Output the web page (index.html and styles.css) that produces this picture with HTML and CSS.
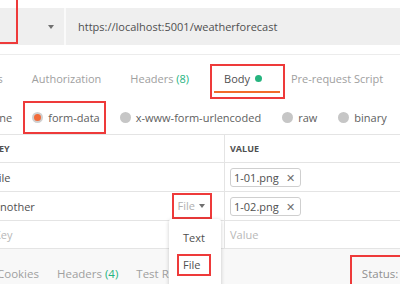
FILE: index.html
```html
<!DOCTYPE html>
<html lang="en">
<head>
  <meta charset="UTF-8">
  <title>Request body</title>
  <link rel="stylesheet" href="styles.css">
</head>
<body>

  <div class="urlbar">
    <div class="method"><span class="caret"></span></div>
    <div class="url">https://localhost:5001/weatherforecast</div>
  </div>
  <div class="mark mark-method"></div>

  <div class="tabs">
    <span class="tab tab-params">Params</span>
    <span class="tab">Authorization</span>
    <span class="tab">Headers <b class="count">(8)</b></span>
    <span class="tab tab-active">Body <i class="dot"></i></span>
    <span class="tab">Pre-request Script</span>
  </div>

  <div class="modes">
    <label class="mode mode-none"><i class="radio"></i>none</label>
    <label class="mode mode-form"><i class="radio radio-on"></i>form-data</label>
    <label class="mode"><i class="radio"></i>x-www-form-urlencoded</label>
    <label class="mode"><i class="radio"></i>raw</label>
    <label class="mode"><i class="radio"></i>binary</label>
  </div>

  <div class="table">
    <div class="cell key head">KEY</div>
    <div class="cell val head">VALUE</div>

    <div class="cell key"><span class="k k-file">File</span></div>
    <div class="cell val"><span class="chip">1-01.png <span class="x">✕</span></span></div>

    <div class="cell key"><span class="k k-another">another</span>
      <span class="type">File <span class="caret"></span></span>
    </div>
    <div class="cell val"><span class="chip">1-02.png <span class="x">✕</span></span></div>

    <div class="cell key"><span class="k k-empty">Key</span></div>
    <div class="cell val"><span class="placeholder">Value</span></div>
  </div>

  <div class="resp">
    <span class="rtab rtab-cookies">Cookies</span>
    <span class="rtab">Headers <b class="count">(4)</b></span>
    <span class="rtab">Test Results</span>
    <span class="status">Status: <b class="ok">200 OK</b></span>
  </div>

  <div class="menu">
    <div class="menu-item">Text</div>
    <div class="menu-item menu-file">File</div>
  </div>

</body>
</html>
```

FILE: styles.css
```css
body {
  margin: 0;
  width: 400px;
  height: 284px;
  overflow: hidden;
  position: relative;
  background: #fff;
  font-family: 'Open Sans', sans-serif;
  font-size: 11px;
  color: #505050;
}

.urlbar {
  display: flex;
  margin-top: 8px;
  height: 37px;
  background: #efefef;
  border-bottom: 1px solid #fff;
}

.method {
  width: 66px;
  flex: none;
  border-right: 2px solid #fafafa;
  display: flex;
  align-items: center;
  justify-content: flex-end;
  padding-right: 10px;
  box-sizing: border-box;
}

.caret {
  display: inline-block;
  width: 0;
  height: 0;
  border-left: 3.5px solid transparent;
  border-right: 3.5px solid transparent;
  border-top: 4px solid #707070;
}

.url {
  display: flex;
  align-items: center;
  padding-left: 12px;
  font-size: 11px;
  color: #505050;
}

.mark {
  position: absolute;
  border: 2px solid #ee3a3a;
  box-sizing: border-box;
}

.mark-method {
  left: -4px;
  top: -2px;
  width: 22px;
  height: 46px;
}

.tabs {
  display: flex;
  align-items: center;
  height: 46px;
  margin-top: 8px;
  border-top: 1px solid #ececec;
  margin-left: -36px;
  white-space: nowrap;
}

.tab {
  color: #a0a0a0;
  margin-right: 29px;
}

.count {
  font-weight: normal;
  color: #26b47f;
}

.tab-active {
  color: #505050;
  position: relative;
  margin-left: 4px;
  margin-right: 27px;
  padding: 0 2px;
}

.tab-active::before {
  content: '';
  position: absolute;
  left: -12px;
  right: -21px;
  top: -7px;
  bottom: -13px;
  border: 2px solid #ee3a3a;
}

.tab-active::after {
  content: '';
  position: absolute;
  left: -8px;
  right: -16px;
  bottom: -7px;
  height: 2px;
  background: #f26b2a;
}

.dot {
  display: inline-block;
  width: 7px;
  height: 7px;
  border-radius: 50%;
  background: #26b47f;
  margin-left: 2px;
  vertical-align: 1px;
}

.modes {
  display: flex;
  align-items: center;
  height: 33px;
  margin-left: -30px;
  white-space: nowrap;
}

.mode {
  display: flex;
  align-items: center;
  margin-right: 21px;
  color: #606060;
}

.mode-form {
  position: relative;
  margin-left: -1px;
  margin-right: 20px;
}

.mode-form::before {
  content: '';
  position: absolute;
  left: -9px;
  right: -6px;
  top: -9px;
  bottom: -9px;
  border: 2px solid #ee3a3a;
}

.radio {
  display: inline-block;
  width: 11px;
  height: 11px;
  border-radius: 50%;
  background: #c6c6c6;
  margin-right: 5px;
  box-sizing: border-box;
}

.radio-on {
  background: #f26b3a;
  border: 2px solid #d0d0d0;
}

.table {
  display: grid;
  grid-template-columns: 224px 1fr;
  grid-template-rows: 28px 29px 29px 28px;
  border-top: 1px solid #e4e4e4;
}

.cell {
  display: flex;
  align-items: center;
  border-bottom: 1px solid #e4e4e4;
  white-space: nowrap;
  overflow: hidden;
}

.val {
  border-left: 1px solid #e4e4e4;
  padding-left: 5px;
}

.head {
  font-size: 9px;
  font-weight: bold;
  color: #505050;
}

.key.head {
  text-indent: -7px;
}

.k-file {
  margin-left: -7px;
}

.k-another {
  margin-left: -6px;
}

.k-empty {
  margin-left: -6px;
  color: #b8b8b8;
}

.type {
  margin-left: auto;
  margin-right: 12px;
  color: #b0b0b0;
  border: 2px solid #ee3a3a;
  padding: 3px 5px 4px 4px;
  display: flex;
  align-items: center;
  gap: 4px;
}

.chip {
  border: 1px solid #cfcfcf;
  border-radius: 3px;
  padding: 1px 5px 1px 3px;
  color: #505050;
}

.x {
  margin-left: 4px;
  color: #707070;
  font-size: 11px;
}

.placeholder {
  color: #b8b8b8;
}

.resp {
  display: flex;
  align-items: center;
  height: 48px;
  background: #f8f8f8;
  white-space: nowrap;
  margin-left: -3px;
  font-size: 11.5px;
}

.rtab {
  color: #a0a0a0;
  margin-right: 18px;
}

.status {
  margin-left: auto;
  margin-right: -50px;
  color: #909090;
  border: 2px solid #ee3a3a;
  padding: 9px 8px 9px 10px;
}

.ok {
  font-weight: normal;
  color: #26b47f;
}

.menu {
  position: absolute;
  left: 169px;
  top: 219px;
  width: 52px;
  height: 80px;
  background: #fff;
  border-radius: 3px;
  box-shadow: 0 1px 4px rgba(0, 0, 0, 0.2);
  padding-top: 8px;
  box-sizing: border-box;
}

.menu-item {
  padding: 3px 0 3px 14px;
  color: #505050;
}

.menu-file {
  margin: 6px 10px 0 8px;
  padding: 1px 4px 2px 4px;
  border: 2px solid #ee3a3a;
}
```
